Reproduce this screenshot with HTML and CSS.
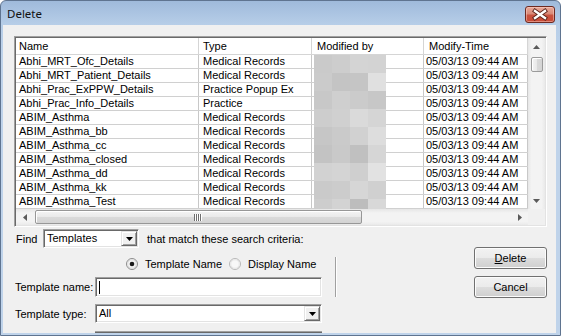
FILE: index.html
```html
<!DOCTYPE html>
<html>
<head>
<meta charset="utf-8">
<link rel="stylesheet" href="styles.css">
</head>
<body>
<div class="window">
  <div class="titlebar">
    <span class="title">Delete</span>
    <div class="close">
      <svg width="28" height="15" viewBox="0 0 28 15">
        <path d="M9 4 L19 11 M19 4 L9 11" stroke="#5a2219" stroke-width="4.2" stroke-linecap="square"/>
        <path d="M9 4 L19 11 M19 4 L9 11" stroke="#ffffff" stroke-width="2.4" stroke-linecap="square"/>
      </svg>
    </div>
  </div>
  <div class="client">
    <div class="list">
      <div class="list-top">
        <div class="view">
          <div class="header">
            <div class="h c1">Name</div>
            <div class="h c2">Type</div>
            <div class="h c3">Modified by</div>
            <div class="h c4">Modify-Time</div>
          </div>
          <div class="body">
            <div class="rows">
              <div class="row"><div class="c c1">Abhi_MRT_Ofc_Details</div><div class="c c2">Medical Records</div><div class="c c3"></div><div class="c c4">05/03/13 09:44 AM</div></div>
              <div class="row"><div class="c c1">Abhi_MRT_Patient_Details</div><div class="c c2">Medical Records</div><div class="c c3"></div><div class="c c4">05/03/13 09:44 AM</div></div>
              <div class="row"><div class="c c1">Abhi_Prac_ExPPW_Details</div><div class="c c2">Practice Popup Ex</div><div class="c c3"></div><div class="c c4">05/03/13 09:44 AM</div></div>
              <div class="row"><div class="c c1">Abhi_Prac_Info_Details</div><div class="c c2">Practice</div><div class="c c3"></div><div class="c c4">05/03/13 09:44 AM</div></div>
              <div class="row"><div class="c c1">ABIM_Asthma</div><div class="c c2">Medical Records</div><div class="c c3"></div><div class="c c4">05/03/13 09:44 AM</div></div>
              <div class="row"><div class="c c1">ABIM_Asthma_bb</div><div class="c c2">Medical Records</div><div class="c c3"></div><div class="c c4">05/03/13 09:44 AM</div></div>
              <div class="row"><div class="c c1">ABIM_Asthma_cc</div><div class="c c2">Medical Records</div><div class="c c3"></div><div class="c c4">05/03/13 09:44 AM</div></div>
              <div class="row"><div class="c c1">ABIM_Asthma_closed</div><div class="c c2">Medical Records</div><div class="c c3"></div><div class="c c4">05/03/13 09:44 AM</div></div>
              <div class="row"><div class="c c1">ABIM_Asthma_dd</div><div class="c c2">Medical Records</div><div class="c c3"></div><div class="c c4">05/03/13 09:44 AM</div></div>
              <div class="row"><div class="c c1">ABIM_Asthma_kk</div><div class="c c2">Medical Records</div><div class="c c3"></div><div class="c c4">05/03/13 09:44 AM</div></div>
              <div class="row"><div class="c c1">ABIM_Asthma_Test</div><div class="c c2">Medical Records</div><div class="c c3"></div><div class="c c4">05/03/13 09:44 AM</div></div>
            </div>
            <svg class="redact" width="72" height="154" viewBox="0 0 72 154">
              <rect x="0" y="0" width="18" height="18" fill="#cacaca"/><rect x="18" y="0" width="18" height="18" fill="#cdcdcd"/><rect x="36" y="0" width="18" height="18" fill="#d4d4d4"/><rect x="54" y="0" width="18" height="18" fill="#d3d3d3"/>
              <rect x="0" y="18" width="18" height="18" fill="#cbcbcb"/><rect x="18" y="18" width="18" height="18" fill="#c4c4c4"/><rect x="36" y="18" width="18" height="18" fill="#c5c5c5"/><rect x="54" y="18" width="18" height="18" fill="#e0e0e0"/>
              <rect x="0" y="36" width="18" height="18" fill="#c8c8c8"/><rect x="18" y="36" width="18" height="18" fill="#cfcfcf"/><rect x="36" y="36" width="18" height="18" fill="#cbcbcb"/><rect x="54" y="36" width="18" height="18" fill="#c7c7c7"/>
              <rect x="0" y="54" width="18" height="18" fill="#cdcdcd"/><rect x="18" y="54" width="18" height="18" fill="#d0d0d0"/><rect x="36" y="54" width="18" height="18" fill="#dadada"/><rect x="54" y="54" width="18" height="18" fill="#d5d5d5"/>
              <rect x="0" y="72" width="18" height="18" fill="#c6c6c6"/><rect x="18" y="72" width="18" height="18" fill="#cacaca"/><rect x="36" y="72" width="18" height="18" fill="#d1d1d1"/><rect x="54" y="72" width="18" height="18" fill="#dddddd"/>
              <rect x="0" y="90" width="18" height="18" fill="#c3c3c3"/><rect x="18" y="90" width="18" height="18" fill="#c9c9c9"/><rect x="36" y="90" width="18" height="18" fill="#c0c0c0"/><rect x="54" y="90" width="18" height="18" fill="#d6d6d6"/>
              <rect x="0" y="108" width="18" height="18" fill="#d2d2d2"/><rect x="18" y="108" width="18" height="18" fill="#d4d4d4"/><rect x="36" y="108" width="18" height="18" fill="#cfcfcf"/><rect x="54" y="108" width="18" height="18" fill="#e2e2e2"/>
              <rect x="0" y="126" width="18" height="18" fill="#cacaca"/><rect x="18" y="126" width="18" height="18" fill="#cccccc"/><rect x="36" y="126" width="18" height="18" fill="#d6d6d6"/><rect x="54" y="126" width="18" height="18" fill="#d0d0d0"/>
              <rect x="0" y="144" width="18" height="10" fill="#cdcdcd"/><rect x="18" y="144" width="18" height="10" fill="#d3d3d3"/><rect x="36" y="144" width="18" height="10" fill="#bdbdbd"/><rect x="54" y="144" width="18" height="10" fill="#d8d8d8"/>
            </svg>
          </div>
        </div>
        <div class="vscroll">
          <div class="arrow">
            <svg width="7" height="4" viewBox="0 0 7 4"><path d="M3.5 0 L7 4 L0 4 Z" fill="#5a5a5a"/></svg>
          </div>
          <div class="vthumb"></div>
          <div class="vtrack"></div>
          <div class="arrow">
            <svg width="7" height="4" viewBox="0 0 7 4"><path d="M0 0 L7 0 L3.5 4 Z" fill="#5a5a5a"/></svg>
          </div>
        </div>
      </div>
      <div class="list-bottom">
        <div class="hscroll">
          <div class="harrow">
            <svg width="4" height="7" viewBox="0 0 4 7"><path d="M4 0 L4 7 L0 3.5 Z" fill="#5a5a5a"/></svg>
          </div>
          <div class="hthumb">
            <svg width="9" height="7" viewBox="0 0 9 7">
              <path d="M0.5 0 V7 M2.5 0 V7 M4.5 0 V7 M6.5 0 V7" stroke="#6e6e6e" stroke-width="1"/>
              <path d="M1.5 0 V7 M3.5 0 V7 M5.5 0 V7 M7.5 0 V7" stroke="#ffffff" stroke-width="1"/>
            </svg>
          </div>
          <div class="htrack"></div>
          <div class="harrow">
            <svg width="4" height="7" viewBox="0 0 4 7"><path d="M0 0 L4 3.5 L0 7 Z" fill="#5a5a5a"/></svg>
          </div>
        </div>
        <div class="corner"></div>
      </div>
    </div>

    <div class="bottom">
      <div class="form">
        <div class="find-row">
          <span class="find-label">Find</span>
          <div class="combo find-combo">
            <span class="val">Templates</span>
            <span class="drop"><svg width="7" height="4" viewBox="0 0 7 4"><path d="M0 0 L7 0 L3.5 4 Z" fill="#000"/></svg></span>
          </div>
          <span class="criteria">that match these search criteria:</span>
        </div>
        <div class="radio-row">
          <label class="opt opt1">
            <svg class="radio" width="12" height="12" viewBox="0 0 12 12">
              <circle cx="6" cy="6" r="5.5" fill="#f4f4f4" stroke="#8c8c8c"/>
              <circle cx="6" cy="6" r="4.3" fill="none" stroke="#dcdcdc"/>
              <circle cx="6" cy="6" r="2.3" fill="#1a1a1a"/>
            </svg>
            <span>Template Name</span>
          </label>
          <label class="opt">
            <svg class="radio" width="12" height="12" viewBox="0 0 12 12">
              <circle cx="6" cy="6" r="5.5" fill="#f8f8f8" stroke="#b8b8b8"/>
              <circle cx="6" cy="6" r="4.3" fill="none" stroke="#e6e6e6"/>
            </svg>
            <span>Display Name</span>
          </label>
        </div>
        <div class="field name-field">
          <span class="flabel">Template name:</span>
          <div class="textbox"><span class="caret"></span></div>
        </div>
        <div class="field type-field">
          <span class="flabel">Template type:</span>
          <div class="combo wide-combo">
            <span class="val">All</span>
            <span class="drop"><svg width="7" height="4" viewBox="0 0 7 4"><path d="M0 0 L7 0 L3.5 4 Z" fill="#000"/></svg></span>
          </div>
        </div>
        <div class="cut"></div>
      </div>
      <div class="sep"></div>
      <div class="buttons">
        <div class="btn"><span><u>D</u>elete</span></div>
        <div class="btn"><span>Cancel</span></div>
      </div>
    </div>
  </div>
</div>
</body>
</html>
```

FILE: styles.css
```css
* { box-sizing: border-box; }
html, body { margin: 0; padding: 0; background: #ffffff; }
body {
  width: 561px;
  height: 336px;
  overflow: hidden;
  font-family: "Liberation Sans", Arial, sans-serif;
  font-size: 11px;
  color: #000;
}

.window {
  width: 561px;
  height: 336px;
  border: 1px solid #5f7490;
  border-radius: 6px 6px 0 0;
  background: linear-gradient(to bottom, #9fbadb 0px, #b7cee8 24px, #bfd3ea 60px, #bfd3ea 100%);
  display: flex;
  flex-direction: column;
}

.titlebar {
  height: 24px;
  flex: none;
  display: flex;
  align-items: center;
  padding-left: 6px;
}
.title {
  font-family: "Noto Sans", "Open Sans", sans-serif;
  font-size: 11.5px;
  color: #111;
  margin-top: 1px;
}
.close {
  margin-left: auto;
  margin-right: 5px;
  margin-top: 3px;
  width: 30px;
  height: 17px;
  border: 1px solid #6e2a21;
  border-radius: 3px;
  background: linear-gradient(to bottom, #e9a898 0%, #d98a78 45%, #c8523f 55%, #c94a35 100%);
  box-shadow: inset 0 0 0 1px rgba(255,220,210,0.45);
  display: flex;
  align-items: center;
  justify-content: center;
}

.client {
  flex: 1;
  margin: 0 4px 2px 2px;
  background: #f0f0f0;
  display: flex;
  flex-direction: column;
  overflow: hidden;
}

/* list view */
.list {
  margin: 11px 0 0 11px;
  width: 533px;
  height: 191px;
  flex: none;
  border: 1px solid;
  border-color: #a0a0a0 #ffffff #ffffff #a0a0a0;
  box-shadow: inset 1px 1px 0 #696969, inset -1px -1px 0 #e3e3e3;
  padding: 1px;
  background: #ffffff;
  display: flex;
  flex-direction: column;
}
.list-top { display: flex; height: 171px; }
.view { width: 512px; display: flex; flex-direction: column; overflow: hidden; }

.header { display: flex; height: 17px; border-bottom: 1px solid #d5d5d5; background: #ffffff; }
.h { height: 16px; line-height: 16px; border-right: 1px solid #d5d5d5; white-space: nowrap; }

.c1 { width: 183px; padding-left: 3px; }
.c2 { width: 113px; padding-left: 4px; }
.c3 { width: 112px; }
.c4 { width: 104px; padding-left: 2px; }
.h.c3 { padding-left: 5px; }
.h.c4 { padding-left: 5px; }

.body { display: grid; }
.rows { grid-area: 1 / 1; display: flex; flex-direction: column; }
.row { display: flex; height: 14px; border-bottom: 1px solid #d0d0d0; }
.c { height: 13px; line-height: 13px; border-right: 1px solid #c8c8c8; white-space: nowrap; overflow: hidden; }
.redact { grid-area: 1 / 1; margin-left: 298px; display: block; }

/* vertical scrollbar */
.vscroll {
  width: 17px;
  display: flex;
  flex-direction: column;
  background: linear-gradient(to right, #e6e6e6 0, #f3f3f3 20%, #f3f3f3 80%, #e9e9e9 100%);
}
.arrow { height: 17px; display: flex; align-items: center; justify-content: center; flex: none; }
.vthumb {
  margin: 2px 2px 0 3px;
  height: 15px;
  flex: none;
  border: 1px solid #9b9b9b;
  border-radius: 2px;
  background: linear-gradient(to right, #f4f4f4 0, #e8e8e8 50%, #d9d9d9 51%, #d4d4d4 100%);
  box-shadow: inset 1px 1px 0 #ffffff;
}
.vtrack { flex: 1; }

/* horizontal scrollbar */
.list-bottom { display: flex; height: 16px; }
.hscroll {
  width: 512px;
  display: flex;
  background: linear-gradient(to bottom, #e6e6e6 0, #f3f3f3 25%, #f3f3f3 80%, #e9e9e9 100%);
}
.harrow { width: 17px; display: flex; align-items: center; justify-content: center; flex: none; }
.hthumb {
  margin: 1px 0 0 2px;
  width: 327px;
  height: 14px;
  flex: none;
  border: 1px solid #979797;
  border-radius: 2px;
  background: linear-gradient(to bottom, #f4f4f4 0, #e9e9e9 50%, #dadada 51%, #d3d3d3 100%);
  box-shadow: inset 1px 1px 0 #ffffff;
  display: flex;
  align-items: center;
  justify-content: center;
}
.htrack { flex: 1; }
.corner { width: 17px; background: #f0f0f0; }

/* bottom form */
.bottom { display: flex; margin-top: 2px; flex: 1; }
.form { width: 332px; padding-left: 12px; display: flex; flex-direction: column; flex: none; }

.find-row { display: flex; align-items: center; height: 19px; }
.find-label { width: 28px; padding-left: 1px; }
.criteria { margin-left: 8px; }

.combo {
  display: flex;
  height: 19px;
  background: #ffffff;
  border: 1px solid;
  border-color: #a0a0a0 #ffffff #ffffff #a0a0a0;
  box-shadow: inset 1px 1px 0 #696969, inset -1px -1px 0 #e3e3e3;
  padding: 1px;
}
.find-combo { width: 96px; }
.wide-combo { width: 227px; }
.combo .val { flex: 1; padding-left: 2px; line-height: 15px; }
.combo .drop {
  width: 16px;
  height: 15px;
  background: #f0f0f0;
  border: 1px solid;
  border-color: #e3e3e3 #696969 #696969 #e3e3e3;
  box-shadow: inset 1px 1px 0 #ffffff, inset -1px -1px 0 #a0a0a0;
  display: flex;
  align-items: center;
  justify-content: center;
}

.radio-row { display: flex; align-items: center; height: 14px; margin-top: 9px; padding-left: 111px; }
.opt { display: flex; align-items: center; }
.opt1 { width: 103px; }
.radio { flex: none; margin-right: 7px; }

.field { display: flex; align-items: center; }
.name-field { margin-top: 6px; height: 20px; }
.type-field { margin-top: 7px; height: 19px; }
.flabel { width: 80px; }

.textbox {
  width: 227px;
  height: 20px;
  background: #ffffff;
  border: 1px solid;
  border-color: #a0a0a0 #ffffff #ffffff #a0a0a0;
  box-shadow: inset 1px 1px 0 #696969, inset -1px -1px 0 #e3e3e3;
  padding: 3px 0 0 3px;
}
.caret { display: block; width: 1px; height: 13px; background: #000; }

.cut {
  margin-top: 8px;
  margin-left: 80px;
  width: 227px;
  height: 4px;
  border-top: 1px solid #a0a0a0;
  box-shadow: inset 0 1px 0 #696969;
  background: #ffffff;
}

.sep {
  width: 2px;
  height: 40px;
  margin-top: 28px;
  border-left: 1px solid #a0a0a0;
  border-right: 1px solid #ffffff;
  flex: none;
}

.buttons { margin-left: auto; margin-right: 9px; margin-top: 18px; display: flex; flex-direction: column; gap: 7px; }
.btn {
  width: 73px;
  height: 22px;
  border: 1px solid #707070;
  border-radius: 3px;
  background: linear-gradient(to bottom, #f2f2f2 0%, #ebebeb 50%, #dddddd 51%, #cfcfcf 100%);
  box-shadow: inset 0 0 0 1px #fcfcfc;
  display: flex;
  align-items: center;
  justify-content: center;
}
.btn u { text-decoration: underline; text-underline-offset: 1px; }
```
